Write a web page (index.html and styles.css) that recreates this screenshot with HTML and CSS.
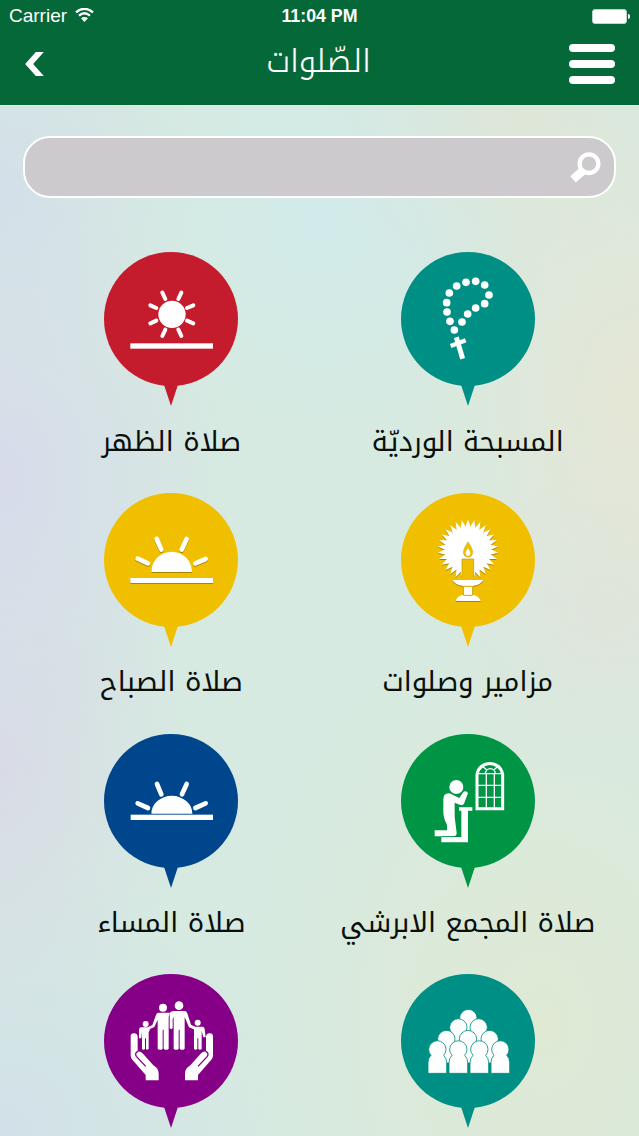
FILE: index.html
```html
<!DOCTYPE html>
<html lang="ar" dir="rtl">
<head>
    <meta charset="UTF-8">
    <meta name="viewport" content="width=device-width, initial-scale=1.0">
    <title>الصّلوات</title>
    <link rel="stylesheet" href="styles.css">
</head>
<body>
<header dir="ltr">
    <div class="status-bar">
        <div class="carrier">
            <span>Carrier</span>
            <svg class="wifi" viewBox="0 0 57 42">
                <path d="M3 13 Q28 -8 54 13" fill="none" stroke="#fff" stroke-width="7"/>
                <path d="M12 23 Q28 9 45 23" fill="none" stroke="#fff" stroke-width="7"/>
                <path d="M18 31 Q28 23 39 31 L28 42 Z" fill="#fff"/>
            </svg>
        </div>
        <span class="time">11:04 PM</span>
        <div class="battery"></div>
    </div>
    <div class="nav">
        <svg class="back" viewBox="0 0 56 72">
            <path d="M56 0 H32 L0 36 L32 72 H56 L24 36 Z" fill="#fff"/>
        </svg>
        <h1>الصّلوات</h1>
        <div class="menu"><i></i><i></i><i></i></div>
    </div>
</header>

<div class="search" dir="ltr">
    <svg viewBox="0 0 93 93">
        <circle cx="57" cy="35" r="28" fill="none" stroke="#fff" stroke-width="13"/>
        <path d="M41 54 L9 82" stroke="#fff" stroke-width="25"/>
    </svg>
</div>

<!-- shared shapes -->
<svg class="defs">
    <defs>
        <g id="pin">
            <circle cx="201" cy="201" r="201"/>
            <path d="M179 395 H223 L201 462 Z"/>
        </g>
        <path id="spikes" d="M0 -91 L8 -67 H-8 Z M78.8 45.5 L54 40.4 L62 26.6 Z M-78.8 45.5 L-54 40.4 L-62 26.6 Z"/>
        <path id="person" d="M-19 18 A26 26 0 1 1 19 18 Q28 26 28 40 V72 H-28 V40 Q-28 26 -19 18 Z"/>
        <g id="hand">
            <path d="M122 230 Q122 221 132 221 Q143 221 143 232 V276 Q151 273 159 282 L190 317 Q206 326 206 342 V362 H167 V346 L127 300 Q122 295 122 287 Z" fill="#fff"/>
            <path d="M144 275 Q133 280 139 290 L167 320" fill="none" stroke="#860087" stroke-width="4"/>
        </g>
    </defs>
</svg>

<main>
    <div class="item">
        <svg class="pin teal" viewBox="0 0 402 462">
            <use href="#pin"/>
            <g transform="translate(-123 -36)" fill="#fff">
                <circle cx="290" cy="138" r="11.5"/>
                <circle cx="318" cy="127" r="11.5"/>
                <circle cx="347" cy="124" r="11.5"/>
                <circle cx="374" cy="135" r="11.5"/>
                <circle cx="387" cy="165" r="11.5"/>
                <circle cx="374" cy="191" r="11.5"/>
                <circle cx="347" cy="204" r="11.5"/>
                <circle cx="323" cy="222" r="11.5"/>
                <circle cx="306" cy="246" r="11.5"/>
                <circle cx="283" cy="270" r="11.5"/>
                <circle cx="270" cy="244" r="11.5"/>
                <circle cx="261" cy="216" r="11.5"/>
                <circle cx="260" cy="188" r="11.5"/>
                <circle cx="268" cy="159" r="11.5"/>
                <path d="M289 292 L308 356" stroke="#fff" stroke-width="15"/>
                <path d="M272 318 L317 301" stroke="#fff" stroke-width="13"/>
            </g>
        </svg>
        <span class="label">المسبحة الورديّة</span>
    </div>

    <div class="item">
        <svg class="pin red" viewBox="0 0 402 462">
            <use href="#pin"/>
            <g transform="translate(-42 -36)" fill="#fff">
                <circle cx="246" cy="223" r="41"/>
                <path class="rays thin" d="M217 158 L226 177 M274 158 L265 177 M181 196 L199 204 M310 196 L291 204 M181 250 L199 242 M310 250 L291 242 M217 288 L226 269 M274 288 L265 269"/>
                <rect x="121" y="310" width="248" height="16"/>
            </g>
        </svg>
        <span class="label">صلاة الظهر</span>
    </div>

    <div class="item">
        <svg class="pin yellow" viewBox="0 0 402 462">
            <use href="#pin"/>
            <g class="shaded" transform="translate(-93 -39)" fill="#fff">
                <g transform="translate(294 209)">
                    <circle r="69"/>
                    <use href="#spikes"/>
                    <use href="#spikes" transform="rotate(12)"/>
                    <use href="#spikes" transform="rotate(24)"/>
                    <use href="#spikes" transform="rotate(36)"/>
                    <use href="#spikes" transform="rotate(48)"/>
                    <use href="#spikes" transform="rotate(60)"/>
                    <use href="#spikes" transform="rotate(72)"/>
                    <use href="#spikes" transform="rotate(84)"/>
                    <use href="#spikes" transform="rotate(96)"/>
                    <use href="#spikes" transform="rotate(108)"/>
                </g>
                <path d="M247 300 H340 Q330 316 308 318 V344 Q326 346 332 363 H257 Q262 346 280 344 V318 Q257 316 247 300 Z"/>
            </g>
            <g transform="translate(-93 -39)" fill="#f0bf00">
                <path d="M276 237 H311 V286 L318 299 H268 L276 286 Z"/>
                <path d="M276 292 V237 H311 V292" fill="none" stroke="#b89520" stroke-width="2"/>
                <path d="M294 185 Q309 206 308 218 Q306 232 294 232 Q281 231 280 218 Q280 206 294 185 Z" stroke="#b89520" stroke-width="1"/>
                <path d="M294 205 Q301 214 301 220 Q300 228 294 229 Q287 228 287 220 Q287 214 294 205 Z" fill="#fff"/>
                <path d="M280 318 V345 M308 318 V345 M282 319 H306 M280 346 H308" stroke="#d2a500" stroke-width="3"/>
            </g>
        </svg>
        <span class="label">مزامير وصلوات</span>
    </div>

    <div class="item">
        <svg class="pin yellow" viewBox="0 0 402 462">
            <use href="#pin"/>
            <g class="shaded" transform="translate(-42 -39)" fill="#fff">
                <path d="M184 276 A61 61 0 0 1 306 276 Z"/>
                <path class="rays" d="M200 177 L214 209 M290 177 L275 209 M143 236 L174 250 M347 237 L316 250"/>
                <rect x="121" y="294" width="248" height="15"/>
            </g>
        </svg>
        <span class="label">صلاة الصباح</span>
    </div>

    <div class="item">
        <svg class="pin green" viewBox="0 0 402 462">
            <use href="#pin"/>
            <g transform="translate(-210 -41)" fill="#fff">
                <g fill="none" stroke="#fff" stroke-width="4">
                    <path d="M438 265 V162 A39 39 0 0 1 515 162 V265 Z" stroke-width="9"/>
                    <path d="M466 160 V265 M490 160 V265 M438 160 H515 M438 195 H515 M438 231 H515"/>
                    <path d="M463 160 A15 15 0 0 1 493 160 M468 149 L450 135 M488 149 L505 135"/>
                </g>
                <circle cx="376" cy="200" r="21"/>
                <path d="M337 238 Q337 219 353 219 Q360 219 366 224 L385 233 L397 215 Q405 209 411 218 L399 250 Q395 257 386 253 L371 247 V290 L377 338 Q377 348 366 348 H311 V330 H348 V314 Q336 292 337 270 Z"/>
                <path d="M384 261 H424 V271 H411 V366 H331 V350 H391 V271 H384 Z"/>
                <path d="M331 349 H391" stroke="#009445" stroke-width="2"/>
            </g>
        </svg>
        <span class="label">صلاة المجمع الابرشي</span>
    </div>

    <div class="item">
        <svg class="pin blue" viewBox="0 0 402 462">
            <use href="#pin"/>
            <g transform="translate(-42 -41)" fill="#fff">
                <path d="M184 280 A61 53 0 0 1 307 280 Z"/>
                <path class="rays" d="M201 191 L214 222 M290 191 L276 222 M143 249 L174 263 M347 249 L316 263"/>
                <rect x="122" y="283" width="247" height="16"/>
            </g>
        </svg>
        <span class="label">صلاة المساء</span>
    </div>

    <div class="item">
        <svg class="pin teal" viewBox="0 0 402 462">
            <use href="#pin"/>
            <g transform="translate(-30 -43)" fill="#fff" stroke="#008f84" stroke-width="2.5">
                <use href="#person" x="232" y="175"/>
                <use href="#person" x="202" y="203"/>
                <use href="#person" x="263" y="203"/>
                <use href="#person" x="166" y="238"/>
                <use href="#person" x="231" y="238"/>
                <use href="#person" x="296" y="238"/>
                <use href="#person" x="139" y="269"/>
                <use href="#person" x="202" y="269"/>
                <use href="#person" x="265" y="269"/>
                <use href="#person" x="328" y="269"/>
            </g>
        </svg>
    </div>

    <div class="item">
        <svg class="pin purple" viewBox="0 0 402 462">
            <use href="#pin"/>
            <g transform="translate(-42 -43)" fill="#fff">
                <use href="#hand"/>
                <use href="#hand" transform="translate(491 0) scale(-1 1)"/>
                <!-- parents -->
                <circle cx="219" cy="144" r="12"/>
                <circle cx="267" cy="138" r="13"/>
                <path d="M206 159 H240 L236 172 V267 Q229 274 221 267 V210 H218 V267 Q211 274 203 267 V180 L193 202 L178 209 L175 202 L187 196 L198 166 Q200 159 206 159 Z"/>
                <path d="M252 154 H283 Q290 154 292 161 L303 195 L318 203 L314 210 L297 203 L284 172 V267 Q276 274 269 267 V210 H266 V267 Q259 274 251 267 V172 L248 178 V205 Q243 212 239 205 V164 Q240 154 252 154 Z"/>
                <!-- children -->
                <circle cx="167" cy="193" r="9"/>
                <circle cx="323" cy="189" r="9"/>
                <path d="M154 203 H179 V213 L176 216 V268 Q171 272 168 268 V236 H165 V268 Q160 272 156 268 V215 L154 236 H147 V212 Q147 203 154 203 Z"/>
                <path d="M312 201 H338 Q344 201 344 209 L347 233 H340 L335 213 V268 Q330 272 325 268 V236 H322 V268 Q317 272 312 268 Z"/>
            </g>
        </svg>
    </div>
</main>
</body>
</html>
```

FILE: styles.css
```css
* {
    box-sizing: border-box;
}

body {
    margin: 0;
    width: 639px;
    height: 1136px;
    overflow: hidden;
    font-family: "Noto Kufi Arabic", "DejaVu Sans", sans-serif;
    background:
        radial-gradient(ellipse 230px 300px at 0 42%, rgba(215, 216, 236, 0.85), transparent),
        radial-gradient(ellipse 190px 260px at 0 68%, rgba(217, 214, 232, 0.75), transparent),
        radial-gradient(circle at 0 16%, rgba(210, 219, 236, 0.7), transparent 200px),
        radial-gradient(circle at 50% 20%, rgba(208, 234, 238, 0.7), transparent 200px),
        radial-gradient(ellipse 240px 330px at 100% 35%, rgba(231, 230, 212, 0.9), transparent),
        radial-gradient(circle at 95% 53%, rgba(226, 225, 221, 0.6), transparent 180px),
        radial-gradient(circle at 80% 10%, rgba(225, 228, 212, 0.7), transparent 190px),
        radial-gradient(ellipse 300px 420px at 85% 90%, rgba(224, 233, 211, 0.9), transparent),
        radial-gradient(circle at 0 100%, rgba(208, 222, 234, 0.8), transparent 280px),
        #d6eae1;
}

header {
    height: 106px;
    background: #046838;
    border-bottom: 1px solid #d5f0e2;
    color: #fff;
}

.status-bar {
    display: grid;
    grid-template-columns: 1fr auto 1fr;
    align-items: center;
    height: 32px;
    padding: 0 9px 0 9px;
    font-family: "Liberation Sans", sans-serif;
    font-size: 19px;
}

.carrier {
    display: flex;
    align-items: center;
    gap: 8px;
}

.wifi {
    width: 19px;
    height: 14px;
    margin-top: -2px;
}

.time {
    font-size: 17.8px;
    font-weight: bold;
}

.battery {
    position: relative;
    justify-self: end;
    width: 35px;
    height: 15px;
    margin-right: 3px;
    background: #fff;
    border: 1px solid #b9d8c6;
    border-radius: 3px;
}

/* battery tip */
.battery::after {
    content: "";
    position: absolute;
    top: 4px;
    right: -4px;
    width: 2px;
    height: 5px;
    background: #fff;
    border-radius: 0 2px 2px 0;
}

.nav {
    display: grid;
    grid-template-columns: 1fr auto 1fr;
    align-items: center;
    height: 64px;
    padding: 0 24px 0 25px;
}

.back {
    width: 19px;
    height: 24px;
}

h1 {
    margin: 0 3px 4px 0;
    font-size: 32px;
    font-weight: 300;
    line-height: 60px;
}

.menu {
    display: flex;
    flex-direction: column;
    justify-content: space-between;
    justify-self: end;
    width: 46px;
    height: 40px;
}

.menu i {
    height: 8px;
    background: #fff;
    border-radius: 4px;
}

.search {
    display: flex;
    align-items: center;
    justify-content: flex-end;
    width: 593px;
    height: 62px;
    margin: 30px auto 0;
    padding-right: 13px;
    background: #cccacc;
    border: 2px solid #fff;
    border-radius: 27px;
}

.search svg {
    width: 31px;
    height: 31px;
}

.defs {
    display: block;
    width: 0;
    height: 0;
}

main {
    display: grid;
    grid-template-columns: 296.5px 296.5px;
    grid-template-rows: repeat(3, 240.75px) auto;
    padding: 54px 23px 0;
}

.item {
    display: flex;
    flex-direction: column;
    align-items: center;
}

.pin {
    width: 134px;
    height: 154px;
}

.label {
    margin-top: 10.5px;
    font-size: 27.6px;
    line-height: 50px;
    white-space: nowrap;
    color: #0a0f0c;
}

.rays {
    fill: none;
    stroke: #fff;
    stroke-width: 14;
    stroke-linecap: round;
}

.rays.thin {
    stroke-width: 12;
}

.shaded {
    filter: drop-shadow(0 3px 1px rgba(120, 95, 0, 0.6));
}

.teal { fill: #008f84; }
.red { fill: #c41c2d; }
.yellow { fill: #f0bf00; }
.green { fill: #009445; }
.blue { fill: #00468c; }
.purple { fill: #860087; }
```
